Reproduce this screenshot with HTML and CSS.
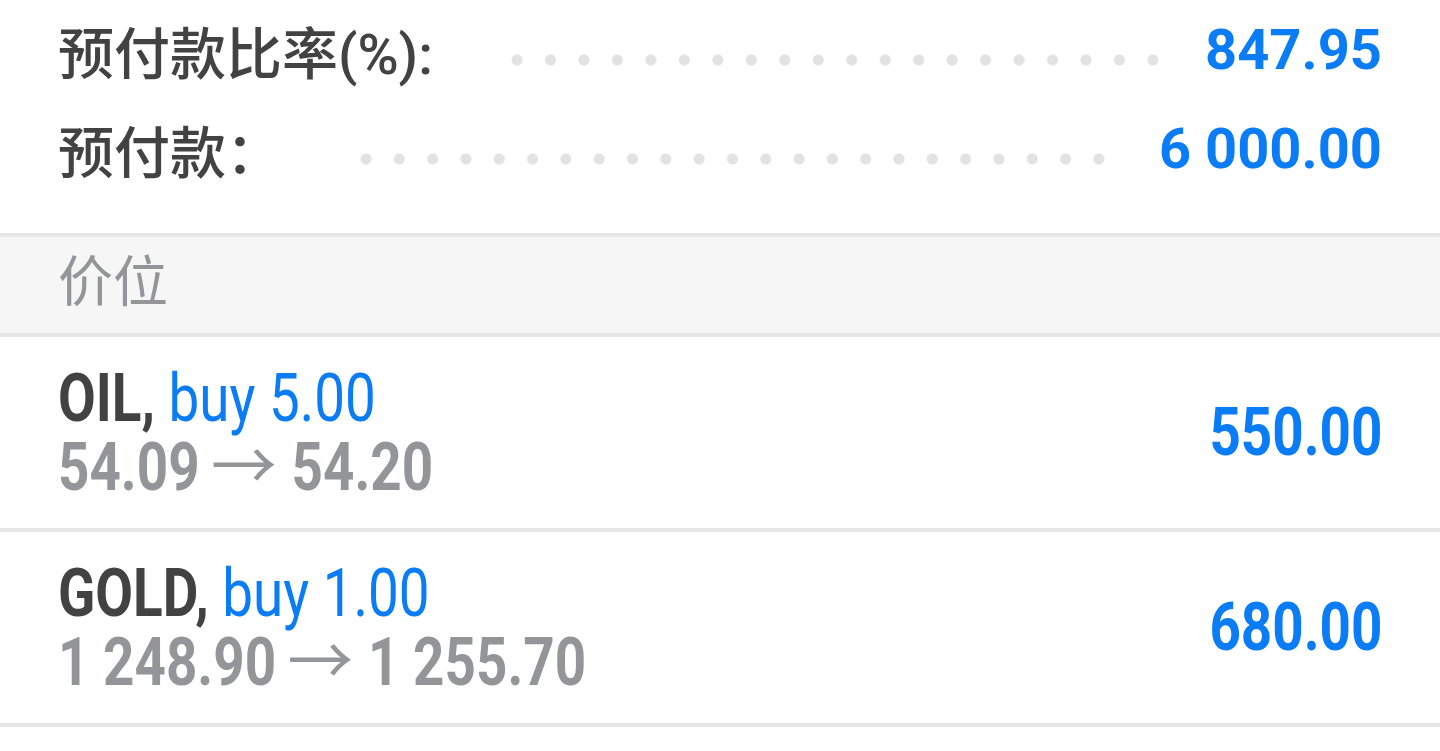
FILE: index.html
```html
<!DOCTYPE html>
<html lang="zh-CN">

<head>
    <meta charset="UTF-8">
    <meta name="viewport" content="width=device-width, initial-scale=1.0">
    <title>交易</title>
    <link rel="stylesheet" href="styles.css">
</head>

<body>
    <div class="account">
        <div class="stat-row">
            <span class="stat-label">预付款比率(%):</span>
            <span class="leader leader-ratio"></span>
            <span class="stat-value">847.95</span>
        </div>
        <div class="stat-row">
            <span class="stat-label">预付款：</span>
            <span class="leader leader-margin"></span>
            <span class="stat-value">6 000.00</span>
        </div>
    </div>

    <div class="section-title">价位</div>

    <!-- Open positions -->
    <div class="position">
        <div class="position-info">
            <div class="narrow position-head"><span class="symbol">OIL,</span> <span class="deal">buy 5.00</span></div>
            <div class="narrow position-prices">54.09 <span class="arrow">→</span> 54.20</div>
        </div>
        <div class="narrow position-profit">550.00</div>
    </div>

    <div class="position">
        <div class="position-info">
            <div class="narrow position-head"><span class="symbol">GOLD,</span> <span class="deal">buy 1.00</span></div>
            <div class="narrow position-prices">1 248.90 <span class="arrow">→</span> 1 255.70</div>
        </div>
        <div class="narrow position-profit">680.00</div>
    </div>
</body>

</html>
```

FILE: styles.css
```css
body {
    font-family: Roboto, "Noto Sans CJK SC", sans-serif;
    margin: 0;
    padding: 0;
    background-color: #ffffff;
    color: #424242;
}

.account {
    padding: 0 58px 35px;
    border-bottom: 4px solid #e6e6e6;
}

.stat-row {
    display: flex;
    align-items: center;
    height: 99px;
}

.stat-label {
    font-size: 56px;
    font-weight: 500;
    color: #424242;
    white-space: nowrap;
}

.leader {
    flex: 1;
    height: 12px;
    margin-top: 20px;
    background-image: radial-gradient(circle, #e2e2e2 5px, transparent 6px);
    background-size: 32px 12px;
    background-repeat: space no-repeat;
}

.leader-ratio {
    margin-left: 68px;
    margin-right: 36px;
}

.leader-margin {
    margin-left: 68px;
    margin-right: 44px;
}

.stat-value {
    font-size: 56px;
    font-weight: 700;
    color: #0a7cf6;
    white-space: nowrap;
}

.section-title {
    height: 100px;
    padding: 0 58px 6px;
    box-sizing: border-box;
    display: flex;
    align-items: center;
    background-color: #f6f6f6;
    border-bottom: 4px solid #e6e6e6;
    font-size: 55px;
    color: #939598;
    line-height: 1;
}

.position {
    display: flex;
    align-items: center;
    justify-content: space-between;
    height: 195px;
    padding: 0 58px;
    box-sizing: border-box;
    border-bottom: 4px solid #e6e6e6;
}

.position-info {
    display: flex;
    flex-direction: column;
    margin-top: 0;
}

/* Roboto Condensed is not available, so squeeze Roboto */
.narrow {
    font-size: 66px;
    line-height: 69px;
    white-space: nowrap;
    transform: scaleX(0.83);
    transform-origin: left center;
}

.symbol {
    font-weight: 700;
    color: #424242;
}

.deal {
    color: #0a7cf6;
}

.position-prices {
    font-weight: 700;
    color: #939598;
}

.arrow {
    display: inline-block;
    font-weight: 400;
    transform: scaleX(1.2);
    margin: 0 8px 0 4px;
}

.position-profit {
    font-weight: 700;
    color: #0a7cf6;
    transform-origin: right center;
}
```
